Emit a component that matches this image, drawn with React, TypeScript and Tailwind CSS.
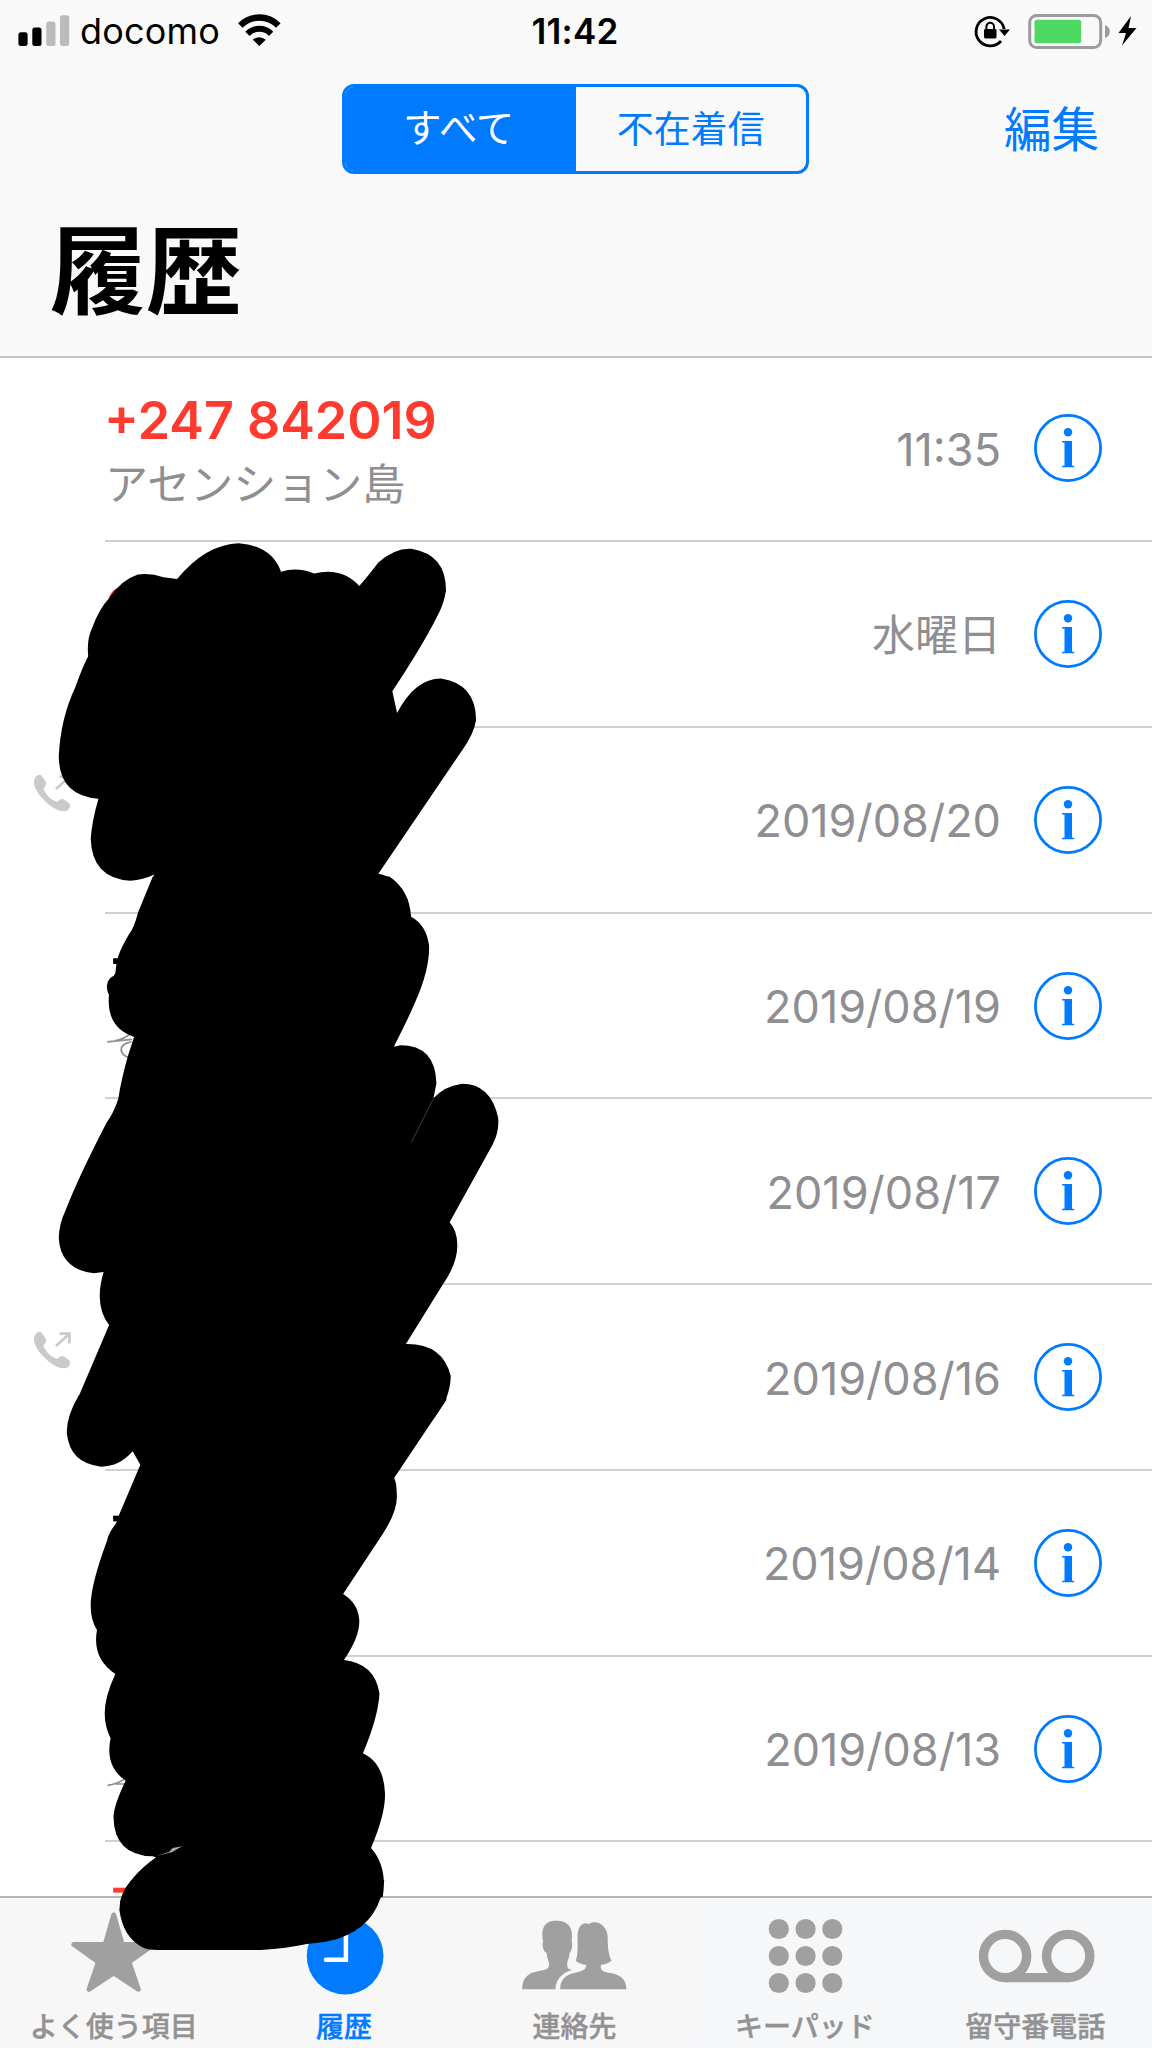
import React from "react";

type Call = { title?: string; place?: string; when: string; outgoing?: boolean; kanji?: boolean };

const calls: Call[] = [
  { title: "+247 842019", place: "アセンション島", when: "11:35" },
  { when: "水曜日", kanji: true },
  { when: "2019/08/20", outgoing: true },
  { when: "2019/08/19" },
  { when: "2019/08/17" },
  { when: "2019/08/16", outgoing: true },
  { when: "2019/08/14" },
  { when: "2019/08/13" },
];

function StatusBar() {
  return (
    <div className="flex h-[62px] items-center justify-between">
      <div className="flex w-[400px] items-center pl-[18px]">
        <svg width="52" height="62" viewBox="18 0 52 62">
          <rect x="18.4" y="32.3" width="9.2" height="13.7" rx="2.5" />
          <rect x="32.3" y="27.6" width="9.2" height="18.4" rx="2.5" />
          <rect x="46.3" y="21.6" width="9.2" height="24.4" rx="2.5" fill="#bbb" />
          <rect x="60" y="15.3" width="9.2" height="30.7" rx="2.5" fill="#bbb" />
        </svg>
        <span className="ml-[10px] w-[157px] text-[36px] leading-none tracking-[0.2px]">docomo</span>
        <svg width="44" height="62" viewBox="237 0 44 62" fill="none" stroke="#000">
          <path d="M240.300 25.500a26.500 26.500 0 0 1 38 0" strokeWidth="6.400" />
          <path d="M247.500 33.800a16.500 16.500 0 0 1 23.600 0" strokeWidth="6" />
          <path d="M259.300 46l-6.500-6.300a9.600 9.600 0 0 1 13 0z" fill="#000" stroke="none" />
        </svg>
      </div>
      <div className="mt-px mr-[2px] whitespace-nowrap text-[35px] font-semibold leading-none tracking-[0.2px]">11:42</div>
      <div className="flex w-[400px] justify-end pr-[14px]">
        <svg width="166" height="62" viewBox="972 0 166 62">
          <path d="M1001 41A14.200 14.200 0 1 1 1004.200 29" fill="none" stroke="#000" strokeWidth="2.800" />
          <path d="M999 29.500h11l-5.500 6.500z" />
          <rect x="984" y="29" width="12.500" height="9.500" rx="1.400" />
          <path d="M986.400 30v-3.400a3.800 3.800 0 0 1 7.600 0V30" fill="none" stroke="#000" strokeWidth="2" />
          <rect x="1029.700" y="15.500" width="71" height="32" rx="7" fill="none" stroke="#9c9c9c" strokeWidth="3" />
          <rect x="1034.500" y="19.800" width="46.700" height="23.400" rx="2.500" fill="#4cd964" />
          <path d="M1105 25.300c6.500 2 6.500 10.700 0 12.700z" fill="#9c9c9c" />
          <path d="M1131 16l-12.500 17h7.500l-4 12.500 14.500-17.500h-8z" />
        </svg>
      </div>
    </div>
  );
}

function InfoIcon() {
  return (
    <svg width="70" height="70" viewBox="-35 -35 70 70" fill="#007aff">
      <circle r="32.600" fill="none" stroke="#007aff" strokeWidth="2.800" />
      <circle cy="-15.700" r="4.200" />
      <path d="M-6-7H4V17.800H6.200V19.300H-6V17.800H-3.500V-5.500H-6z" />
    </svg>
  );
}

function OutgoingIcon() {
  return (
    <svg width="40" height="42" viewBox="0 0 40 42" fill="#cacaca">
      <path d="M1 8C1 3 5 0 8 1l5 7c1 3-2 5-2.500 7 2.500 6 7.500 11 13.500 13 2-2 4-3.500 6-3l6 4c2 2 1 5-1 7-5 4-17-2-24-10C4 19 1 13 1 8z" />
      <path d="M23 15L35.500 3.500M26.500 2.600h9.900V12.500" fill="none" stroke="#cacaca" strokeWidth="2.700" />
    </svg>
  );
}

function CallRow({ call }: { call: Call }) {
  return (
    <div className="flex h-[185.75px] shrink-0">
      <div className="w-[105px] shrink-0 pl-[33px] pt-[46px]">{call.outgoing && <OutgoingIcon />}</div>
      <div className="flex flex-1 items-center border-b-2 border-[#d0d0d3] pr-[49px]">
        <div className="flex-1 pt-[13px]">
          {call.title && (
            <>
              <div className="-ml-px text-[52px] font-semibold leading-[60px]">
                <span className="text-[#ff3b30]">{call.title}</span>
              </div>
              <div className="text-[43px] leading-[67px] text-[#8e8e93]">{call.place}</div>
            </>
          )}
        </div>
        {call.kanji ? (
          <div className="mr-[32px] pt-[3px] text-[43px] leading-none text-[#8e8e93]">{call.when}</div>
        ) : (
          <div className="mr-[32px] pt-[2px] text-[45px] leading-none text-[#8e8e93]">{call.when}</div>
        )}
        <InfoIcon />
      </div>
    </div>
  );
}

const tabs = [
  {
    label: "よく使う項目",
    icon: (
      <path
        d="M113.700 1915l8.500 29.500h31.300l-24.500 17.500 9.300 27.300-24.600-16.500-24.600 16.500 9.300-27.300-24.500-17.500h31.300z"
        stroke="#a0a0a0"
        strokeWidth="5"
        strokeLinejoin="round"
      />
    ),
    x: 0,
  },
  {
    label: "履歴",
    active: true,
    icon: (
      <>
        <circle cx="345.500" cy="1956" r="38.400" />
        <path d="M346.300 1928v31.800h-20" fill="none" stroke="#fff" strokeWidth="4.500" strokeLinecap="round" />
      </>
    ),
    x: 230.4,
  },
  {
    label: "連絡先",
    icon: (
      <>
        <path d="M522 1989.300C522 1983 524 1974 535 1972C542 1970 549 1970 549 1965C549 1961 547 1960 546.500 1953C543 1952 541.500 1944 543 1941.500C540 1926 546 1920.700 556 1920.700C567 1920.700 573.500 1926 571.500 1941.500C573 1945 571 1952 569.500 1953C569 1959 567 1961 567 1964C567 1968 568 1969 571.500 1970C562 1973 555.500 1979 555.300 1989.300z" />
        <path d="M560 1989.300C560 1982 563 1975 575 1972.700C582 1971 586 1970 586 1965C582 1964.500 578 1963 575.500 1960.700C578 1955 577.500 1946 577.300 1937C577.300 1927 582 1921 588.500 1924C598 1918.500 607.300 1927 607.500 1937C607.500 1946 608 1954 611.300 1960.700C608 1963.500 604 1964.500 600.500 1965C600.500 1969 601 1971 607 1972.500C620 1974 626 1979 626.300 1989.300z" />
      </>
    ),
    x: 460.8,
  },
  {
    label: "キーパッド",
    icon: (
      <>
        {[1929, 1956, 1983].map((y) => [779, 805.8, 832.5].map((x) => <circle key={`${x}-${y}`} cx={x} cy={y} r="10.100" />))}
      </>
    ),
    x: 691.2,
  },
  {
    label: "留守番電話",
    icon: (
      <g fill="none" stroke="#a0a0a0" strokeWidth="9.400">
        <circle cx="1004.700" cy="1956" r="21.600" />
        <circle cx="1067.800" cy="1956" r="21.600" />
        <path d="M1004.700 1977.600h63" />
      </g>
    ),
    x: 921.6,
  },
];

function TabBar() {
  return (
    <div className="grid h-[152px] shrink-0 grid-cols-5 border-t-2 border-[#b5b5b8] bg-gradient-to-r from-[#f8f7f7] to-[#f6f7f9]">
      {tabs.map((t) => (
        <div key={t.label} className={t.active ? "text-[#007aff]" : "text-[#929292]"}>
          <svg width="230.4" height="110" viewBox={`${t.x} 1898 230.4 110`} fill={t.active ? "#007aff" : "#a0a0a0"}>
            {t.icon}
          </svg>
          <div className="mt-[4px] whitespace-nowrap pr-[3px] text-center text-[28px] font-medium leading-[30px] [-webkit-text-stroke:0.4px_currentColor]">
            {t.label}
          </div>
        </div>
      ))}
    </div>
  );
}

/* Freehand marker that hides the private names in the list. */
function Scribble() {
  return (
    <svg className="pointer-events-none absolute left-0 top-0" width="1152" height="2048" viewBox="0 0 1152 2048">
      <g transform="translate(0 360) scale(.36735 .3444)">
        <path d="M293 706q5-42 38-47v47z" fill="#ff3b30" />
        <path d="M240 860Q236 810 250 780Q270 722 297 692Q328 640 375 623Q410 618 445 631L482 636Q560 535 650 532Q740 540 765 615Q810 600 855 620Q930 600 978 656Q1000 630 1030 588Q1075 545 1120 548Q1215 565 1214 670Q1208 710 1190 745Q1150 830 1068 962L1081 1025Q1130 925 1200 925Q1295 940 1296 1045Q1290 1085 1260 1130L1030 1492Q1080 1500 1110 1568L1110 1600H380L420 1494Q390 1510 355 1512Q250 1505 247 1390Q250 1340 268 1274Q160 1265 160 1150Q165 1040 205 950Q225 890 240 860z" />
      </g>
      <g transform="translate(0 880) scale(.36735 .3444)">
        <path d="M292 470l68-7M312 467q25-4 42-20M358 470q-30 5-28 25 3 15 20 20" fill="none" stroke="#8e8e93" strokeWidth="5" />
        <path d="M308 227h16v17h-16zM316 275q-25 10-25 33t12 32z" />
        <path d="M416 -10L376 94Q365 140 350 160Q325 205 318 235L314 270Q295 300 296 350Q295 430 365 456L348 512Q330 580 322 635Q310 675 290 705Q215 860 180 955Q160 1000 160 1040Q165 1130 255 1142L282 1138Q255 1235 297 1292L190 1560V1590H1100L1178 1568Q1200 1535 1212 1512Q1227 1475 1227 1440Q1205 1345 1105 1347L1205 1175Q1245 1115 1245 1060Q1245 1020 1224 994L1340 770Q1360 730 1356 690Q1335 590 1255 592Q1210 598 1180 634L1188 590Q1185 480 1090 480L1072 484Q1110 405 1130 355Q1170 260 1168 190Q1160 130 1119 107Q1115 30 1060 -10z" />
        <path d="M1180 634L1120 762" stroke="#555" strokeWidth="2" />
      </g>
      <g transform="translate(0 1400) scale(.36735 .33333)">
        <path d="M293 1156q25-4 45-18M315 1152h28" fill="none" stroke="#8e8e93" strokeWidth="5" />
        <path d="M308 1463h40v15h-40z" fill="#ff3b30" />
        <path d="M308 347h18v17h-18z" />
        <path d="M215 -15Q180 50 182 100Q190 190 275 200Q325 200 361 154L382 194L322 350L316 370Q295 400 292 420Q245 560 247 620Q247 660 264 690Q250 775 314 822Q285 890 285 940Q285 980 301 1015Q285 1100 342 1142Q310 1215 309 1250Q310 1365 415 1369L425 1372Q350 1430 328 1500V1510H1000L1042 1490Q1055 1400 1010 1344Q1050 1240 1048 1180Q1045 1090 988 1060Q1030 950 1033 880Q1020 790 936 780Q980 710 978 660Q975 610 934 582L1040 405Q1085 330 1080 280Q1080 250 1073 234L1215 0V-15z" />
        <path d="M425 1368l35-12 10-12 26-5-28 18z" fill="#aaa" />
      </g>
      <path
        transform="translate(0 1880) scale(.36735 .33333)"
        d="M358 0Q325 40 325 90Q335 170 385 200Q400 210 430 210H710Q780 205 835 192Q910 185 945 165Q1035 120 1046 0z"
      />
    </svg>
  );
}

export default function App() {
  return (
    <div className="relative flex h-[2048px] w-[1152px] flex-col overflow-hidden bg-white font-['Inter','Noto_Sans_CJK_JP',sans-serif] text-black">
      <header className="h-[358px] shrink-0 border-b-2 border-[#c6c6c9] bg-[#f9f9f9]">
        <StatusBar />
        <div className="relative mt-[22px] flex h-[90px] items-center justify-center pr-px">
          <div className="grid h-full w-[467px] grid-cols-2 overflow-hidden rounded-[12px] border-[3px] border-[#007aff] text-[37px] text-[#007aff]">
            <div className="flex items-center justify-center bg-[#007aff] pr-[3px] text-[38.5px] text-white">すべて</div>
            <div className="flex items-center justify-center pt-px">不在着信</div>
          </div>
          <button className="absolute right-[53px] top-[22px] text-[47.5px] leading-none text-[#007aff]">編集</button>
        </div>
        <h1 className="mt-[49px] pl-[50px] text-[96px] font-bold leading-[96px]">履歴</h1>
      </header>
      <main className="-mt-[1.6px] flex flex-1 flex-col overflow-hidden">
        {calls.map((c) => (
          <CallRow key={c.when} call={c} />
        ))}
      </main>
      <TabBar />
      <Scribble />
    </div>
  );
}
